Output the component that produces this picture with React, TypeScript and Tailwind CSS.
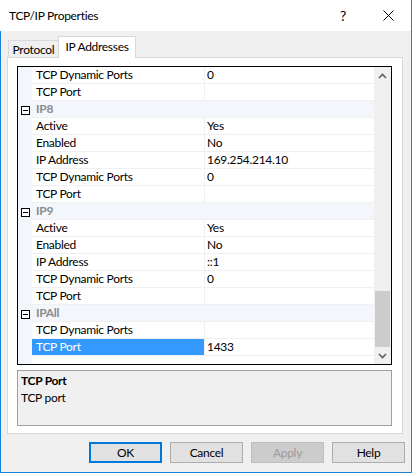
type Row = { cat?: string; name?: string; value?: string; selected?: boolean }

const ROWS: Row[] = [
  { name: 'TCP Dynamic Ports', value: '0' },
  { name: 'TCP Port', value: '' },
  { cat: 'IP8' },
  { name: 'Active', value: 'Yes' },
  { name: 'Enabled', value: 'No' },
  { name: 'IP Address', value: '169.254.214.10' },
  { name: 'TCP Dynamic Ports', value: '0' },
  { name: 'TCP Port', value: '' },
  { cat: 'IP9' },
  { name: 'Active', value: 'Yes' },
  { name: 'Enabled', value: 'No' },
  { name: 'IP Address', value: '::1' },
  { name: 'TCP Dynamic Ports', value: '0' },
  { name: 'TCP Port', value: '' },
  { cat: 'IPAll' },
  { name: 'TCP Dynamic Ports', value: '' },
  { name: 'TCP Port', value: '1433', selected: true },
]

function Chevron({ up }: { up?: boolean }) {
  return (
    <svg width="9" height="6" viewBox="0 0 9 6">
      <path d={up ? 'M1 5 L4.5 1.5 L8 5' : 'M1 1 L4.5 4.5 L8 1'} fill="none" stroke="#606060" strokeWidth="1.6" />
    </svg>
  )
}

function MinusBox() {
  return (
    <svg width="9" height="9" viewBox="0 0 9 9">
      <rect x="0.5" y="0.5" width="8" height="8" fill="#fff" stroke="#000" />
      <path d="M2 4.5 H7" stroke="#000" />
    </svg>
  )
}

function Button({ label, primary, disabled }: { label: string; primary?: boolean; disabled?: boolean }) {
  const cls = disabled
    ? 'border border-[#bfbfbf] bg-[#cccccc] text-[#9d9d9d]'
    : primary
      ? 'border-2 border-[#0078d7] bg-[#e1e1e1] text-black'
      : 'border border-[#adadad] bg-[#e1e1e1] text-black'
  return <div className={`w-[73px] h-[21px] flex items-center justify-center ${cls}`}>{label}</div>
}

export default function App() {
  return (
    <div className="w-[412px] h-[473px] flex flex-col bg-[#f0f0f0] text-[12px] tracking-[-0.3px] text-black font-[family-name:Lato,sans-serif] leading-none">
      {/* title bar */}
      <div className="h-[31px] bg-white flex items-center border-r border-[#1883d7]">
        <span className="pl-[9px] flex-1">TCP/IP Properties</span>
        <div className="w-[46px] h-full flex items-center justify-center text-[14px]">?</div>
        <div className="w-[45px] h-full flex items-center justify-center">
          <svg width="11" height="11" viewBox="0 0 11 11">
            <path d="M0.5 0.5 L10.5 10.5 M10.5 0.5 L0.5 10.5" stroke="#000" strokeWidth="1" />
          </svg>
        </div>
      </div>

      <div className="flex-1 flex flex-col border-l border-r border-b border-[#1883d7] pt-[6px] pb-[8px]">
        {/* tabs */}
        <div className="h-[21px] flex items-end pl-[7px] relative z-10 -mb-px">
          <div className="w-[50px] h-[17px] border-t border-l border-[#d9d9d9] bg-[#f0f0f0] flex items-center justify-center mb-px pt-px">
            Protocol
          </div>
          <div className="w-[78px] h-[22px] border-t border-l border-r border-[#d9d9d9] bg-white flex items-center justify-center pb-[2px]">
            IP Addresses
          </div>
        </div>

        {/* tab panel */}
        <div className="ml-[6px] w-[396px] h-[377px] border border-[#d9d9d9] bg-white pt-[8px] pl-[9px]">
          {/* property grid */}
          <div className="w-[375px] h-[299px] border border-black flex">
            <div className="flex-1 flex flex-col">
              {ROWS.map((r, i) =>
                r.cat ? (
                  <div key={i} className="h-[17px] flex bg-[#f3f6fb]">
                    <div className="w-[14px] flex items-center justify-end pr-[2px] pt-[1px]">
                      <MinusBox />
                    </div>
                    <div className="flex-1 flex items-center pl-[4px] font-bold text-[#8c8c8c] border-b border-[#f0f0f0]">
                      {r.cat}
                    </div>
                  </div>
                ) : (
                  <div key={i} className="h-[17px] flex">
                    <div className="w-[14px] bg-[#f3f6fb]" />
                    <div className="w-[173px] border-r border-b border-[#f0f0f0] flex">
                      <div className={`flex-1 flex items-center pl-[4px] ${r.selected ? 'bg-[#3399ff] text-white' : ''}`}>
                        {r.name}
                      </div>
                    </div>
                    <div className="flex-1 flex items-center pl-[2px] border-b border-[#f0f0f0]">{r.value}</div>
                  </div>
                ),
              )}
              <div className="flex-1 flex">
                <div className="w-[14px] bg-[#f3f6fb]" />
              </div>
            </div>
            {/* scrollbar */}
            <div className="w-[17px] bg-[#f0f0f0] flex flex-col">
              <div className="h-[17px] flex items-center justify-center">
                <Chevron up />
              </div>
              <div className="flex-1 flex flex-col px-px">
                <div className="h-[207px]" />
                <div className="h-[56px] bg-[#cdcdcd]" />
              </div>
              <div className="h-[17px] flex items-center justify-center">
                <Chevron />
              </div>
            </div>
          </div>

          {/* description */}
          <div className="mt-[5px] w-[375px] h-[56px] border border-[#a0a0a0] bg-[#f0f0f0] pl-[3px] pt-[4px] flex flex-col gap-[5px]">
            <div className="font-bold">TCP Port</div>
            <div>TCP port</div>
          </div>
        </div>

        {/* buttons */}
        <div className="mt-[8px] flex justify-end gap-[8px] pr-[6px]">
          <Button label="OK" primary />
          <Button label="Cancel" />
          <Button label="Apply" disabled />
          <Button label="Help" />
        </div>
      </div>
    </div>
  )
}
